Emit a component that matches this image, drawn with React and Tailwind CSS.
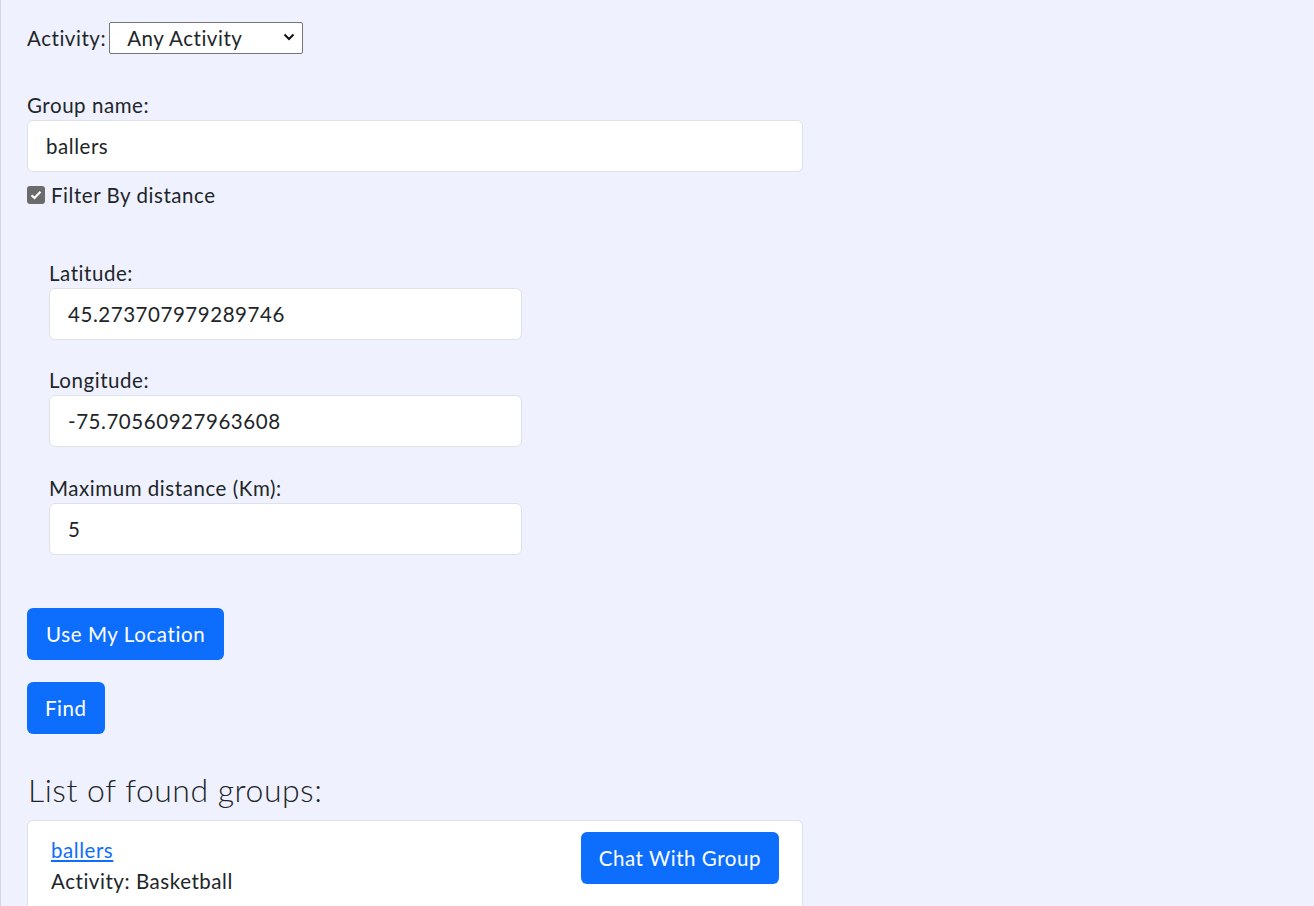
import React, { useState } from "react";

const font = { fontFamily: 'Lato, "Open Sans", sans-serif' };

function Field({ label, value, onChange, className = "" }) {
  return (
    <div className={className}>
      <label className="block leading-[30px]">{label}</label>
      <input
        className="block w-full h-[52px] px-[18px] bg-white border border-[#dee2e6] rounded-[6px] text-[#212529] tracking-[0.55px] outline-none"
        value={value}
        onChange={(e) => onChange(e.target.value)}
      />
    </div>
  );
}

export default function App() {
  const [groupName, setGroupName] = useState("ballers");
  const [lat, setLat] = useState("45.273707979289746");
  const [lng, setLng] = useState("-75.70560927963608");
  const [dist, setDist] = useState("5");
  const [byDistance, setByDistance] = useState(true);

  return (
    <div
      style={font}
      className="min-h-screen bg-[#eff2fe] border-l border-[#d3d7e3] px-[26px] pt-[22px] text-[20.5px] tracking-[0.55px] text-[#212529]"
    >
      {/* activity select */}
      <div className="flex items-center">
        <span className="mr-[3px]">Activity:</span>
        <div className="relative w-[194px] h-[32px]">
          <select className="appearance-none w-full h-full bg-white border border-[#767676] rounded-[2px] pl-[17px] pr-8 leading-[30px] tracking-[0.55px] outline-none">
            <option>Any Activity</option>
            <option>Basketball</option>
            <option>Soccer</option>
          </select>
          <svg
            className="absolute right-[8px] top-[11px] pointer-events-none"
            width="12"
            height="8"
            viewBox="0 0 12 8"
          >
            <path d="M1.5 1.5 6 6l4.5-4.5" fill="none" stroke="#111" strokeWidth="2" />
          </svg>
        </div>
      </div>

      <div className="w-[776px] mt-[36px]">
        <Field label="Group name:" value={groupName} onChange={setGroupName} />

        <label className="flex items-center mt-[8px] leading-[30px]">
          <input
            type="checkbox"
            className="sr-only"
            checked={byDistance}
            onChange={(e) => setByDistance(e.target.checked)}
          />
          <span className="w-[18px] h-[18px] rounded-[3px] bg-[#6b6b6b] flex items-center justify-center mr-[6px]">
            {byDistance && (
              <svg width="12" height="10" viewBox="0 0 12 10">
                <path d="M1.5 5.2 4.5 8 10.5 1.8" fill="none" stroke="#fff" strokeWidth="2.2" />
              </svg>
            )}
          </span>
          Filter By distance
        </label>
      </div>

      {/* distance filters */}
      <div className="w-[473px] ml-[22px] mt-[48px]">
        <Field label="Latitude:" value={lat} onChange={setLat} />
        <Field className="mt-[25px]" label="Longitude:" value={lng} onChange={setLng} />
        <Field className="mt-[26px]" label="Maximum distance (Km):" value={dist} onChange={setDist} />
      </div>

      <div className="mt-[53px] flex flex-col items-start gap-[22px]">
        <button className="h-[52px] px-[19px] rounded-[6px] bg-[#0d6efd] text-white tracking-[0.6px]">
          Use My Location
        </button>
        <button className="h-[52px] px-[18px] rounded-[6px] bg-[#0d6efd] text-white tracking-[0.55px]">
          Find
        </button>
      </div>

      <h2 className="mt-[37px] text-[32px] font-light leading-[38px] ml-[1px] tracking-[0.5px]">
        List of found groups:
      </h2>

      <div className="w-[776px] mt-[11px] bg-white border border-[#dee2e6] rounded-[6px] pl-[23px] pr-[23px] pt-[11px] pb-[14px] flex justify-between">
        <div className="pt-[3px]">
          <a href="#" className="block text-[#0d6efd] underline leading-[30px]">
            ballers
          </a>
          <div className="leading-[32px]">Activity: Basketball</div>
        </div>
        <button className="h-[52px] px-[18px] rounded-[6px] bg-[#0d6efd] text-white tracking-[0.55px]">
          Chat With Group
        </button>
      </div>
    </div>
  );
}
